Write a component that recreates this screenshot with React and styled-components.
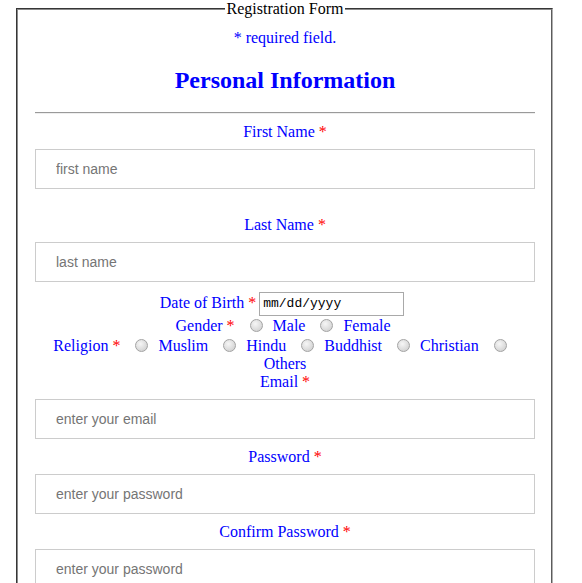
import React from "react";
import styled, { createGlobalStyle } from "styled-components";

const GlobalStyle = createGlobalStyle`
  html, body {
    margin: 0;
    padding: 0;
    background: #ffffff;
  }
  body {
    font-family: "Liberation Serif", "Times New Roman", serif;
    font-size: 16px;
  }
`;

const Fieldset = styled.fieldset`
  box-sizing: border-box;
  width: 537px;
  margin: 0 0 0 16px;
  padding: 0 16px 20px 17px;
  border: 2px groove #b0b0b0;
  border-top-color: #8a8a8a;
  border-left-color: #8a8a8a;
  text-align: center;
`;

const Legend = styled.legend`
  margin: 0 auto;
  padding: 0 2px;
  font-size: 16px;
  line-height: 18px;
  color: #000000;
`;

const Required = styled.p`
  margin: 11px 0 0;
  font-size: 16px;
  line-height: 18px;
  color: #0000ff;
`;

const Heading = styled.h2`
  margin: 20px 0 0;
  font-size: 24px;
  line-height: 27px;
  font-weight: 700;
  color: #0000ff;
`;

const Rule = styled.hr`
  margin: 18px 0 0;
  height: 0;
  border: 0;
  border-top: 1px solid #9a9a9a;
  border-bottom: 1px solid #eeeeee;
`;

const Label = styled.label`
  display: block;
  margin: ${(props) => props.top ?? 9}px 0 8px;
  font-size: 16px;
  line-height: 18px;
  color: #0000ff;
`;

const Star = styled.span`
  color: #ff0000;
`;

const TextInput = styled.input`
  display: block;
  box-sizing: border-box;
  width: 500px;
  height: 40px;
  margin: 0;
  padding: 0 20px;
  border: 1px solid #cccccc;
  border-radius: 0;
  font-family: "Liberation Sans", Arial, sans-serif;
  font-size: 14px;
  color: #333333;
  outline: none;

  &::placeholder {
    color: #757575;
  }
`;

const Row = styled.div`
  margin-top: ${(props) => props.top ?? 0}px;
  padding-right: ${(props) => props.shift ?? 0}px;
  height: ${(props) => (props.height ? `${props.height}px` : "auto")};
  font-size: 16px;
  line-height: ${(props) => props.lineHeight ?? 18}px;
  color: #0000ff;
`;

const DateBox = styled.span`
  display: inline-block;
  box-sizing: border-box;
  width: 145px;
  height: 24px;
  margin-left: 3px;
  padding: 0 3px;
  border: 1px solid #a9a9a9;
  vertical-align: middle;
  text-align: left;
  font-family: "Liberation Mono", "Courier New", monospace;
  font-size: 13px;
  line-height: 22px;
  color: #000000;
`;

const Radio = styled.input`
  appearance: none;
  display: inline-block;
  box-sizing: border-box;
  width: 13px;
  height: 13px;
  margin: 0 10px 0 15px;
  border: 1px solid #a3a3a3;
  border-radius: 50%;
  background: radial-gradient(circle at 40% 35%, #f6f6f6 0%, #e2e2e2 45%, #c9c9c9 100%);
  vertical-align: -1px;
`;

const Choice = styled.span`
  color: #0000ff;
`;

const genders = ["Male", "Female"];
const religions = ["Muslim", "Hindu", "Buddhist", "Christian", "Others"];

const App = () => {
  return (
    <>
      <GlobalStyle />
      <form>
        <Fieldset>
          <Legend>Registration Form</Legend>
          <Required>* required field.</Required>
          <Heading>Personal Information</Heading>
          <Rule />

          <Label>
            First Name <Star>*</Star>
          </Label>
          <TextInput type="text" placeholder="first name" />

          <Label top={27}>
            Last Name <Star>*</Star>
          </Label>
          <TextInput type="text" placeholder="last name" />

          <Row top={9} height={24} lineHeight={24} shift={6}>
            Date of Birth <Star>*</Star>
            <DateBox>mm/dd/yyyy</DateBox>
          </Row>

          <Row lineHeight={21} shift={4}>
            Gender <Star>*</Star>
            {genders.map((g) => (
              <React.Fragment key={g}>
                <Radio type="radio" name="gender" />
                <Choice>{g}</Choice>
              </React.Fragment>
            ))}
          </Row>

          <Row top={1}>
            Religion <Star>*</Star>
            {religions.map((r) => (
              <React.Fragment key={r}>
                <Radio type="radio" name="religion" />
                <Choice>{r}</Choice>
              </React.Fragment>
            ))}
          </Row>

          <Label top={0}>
            Email <Star>*</Star>
          </Label>
          <TextInput type="email" placeholder="enter your email" />

          <Label>
            Password <Star>*</Star>
          </Label>
          <TextInput type="password" placeholder="enter your password" />

          <Label>
            Confirm Password <Star>*</Star>
          </Label>
          <TextInput type="password" placeholder="enter your password" />
        </Fieldset>
      </form>
    </>
  );
};

export default App;
